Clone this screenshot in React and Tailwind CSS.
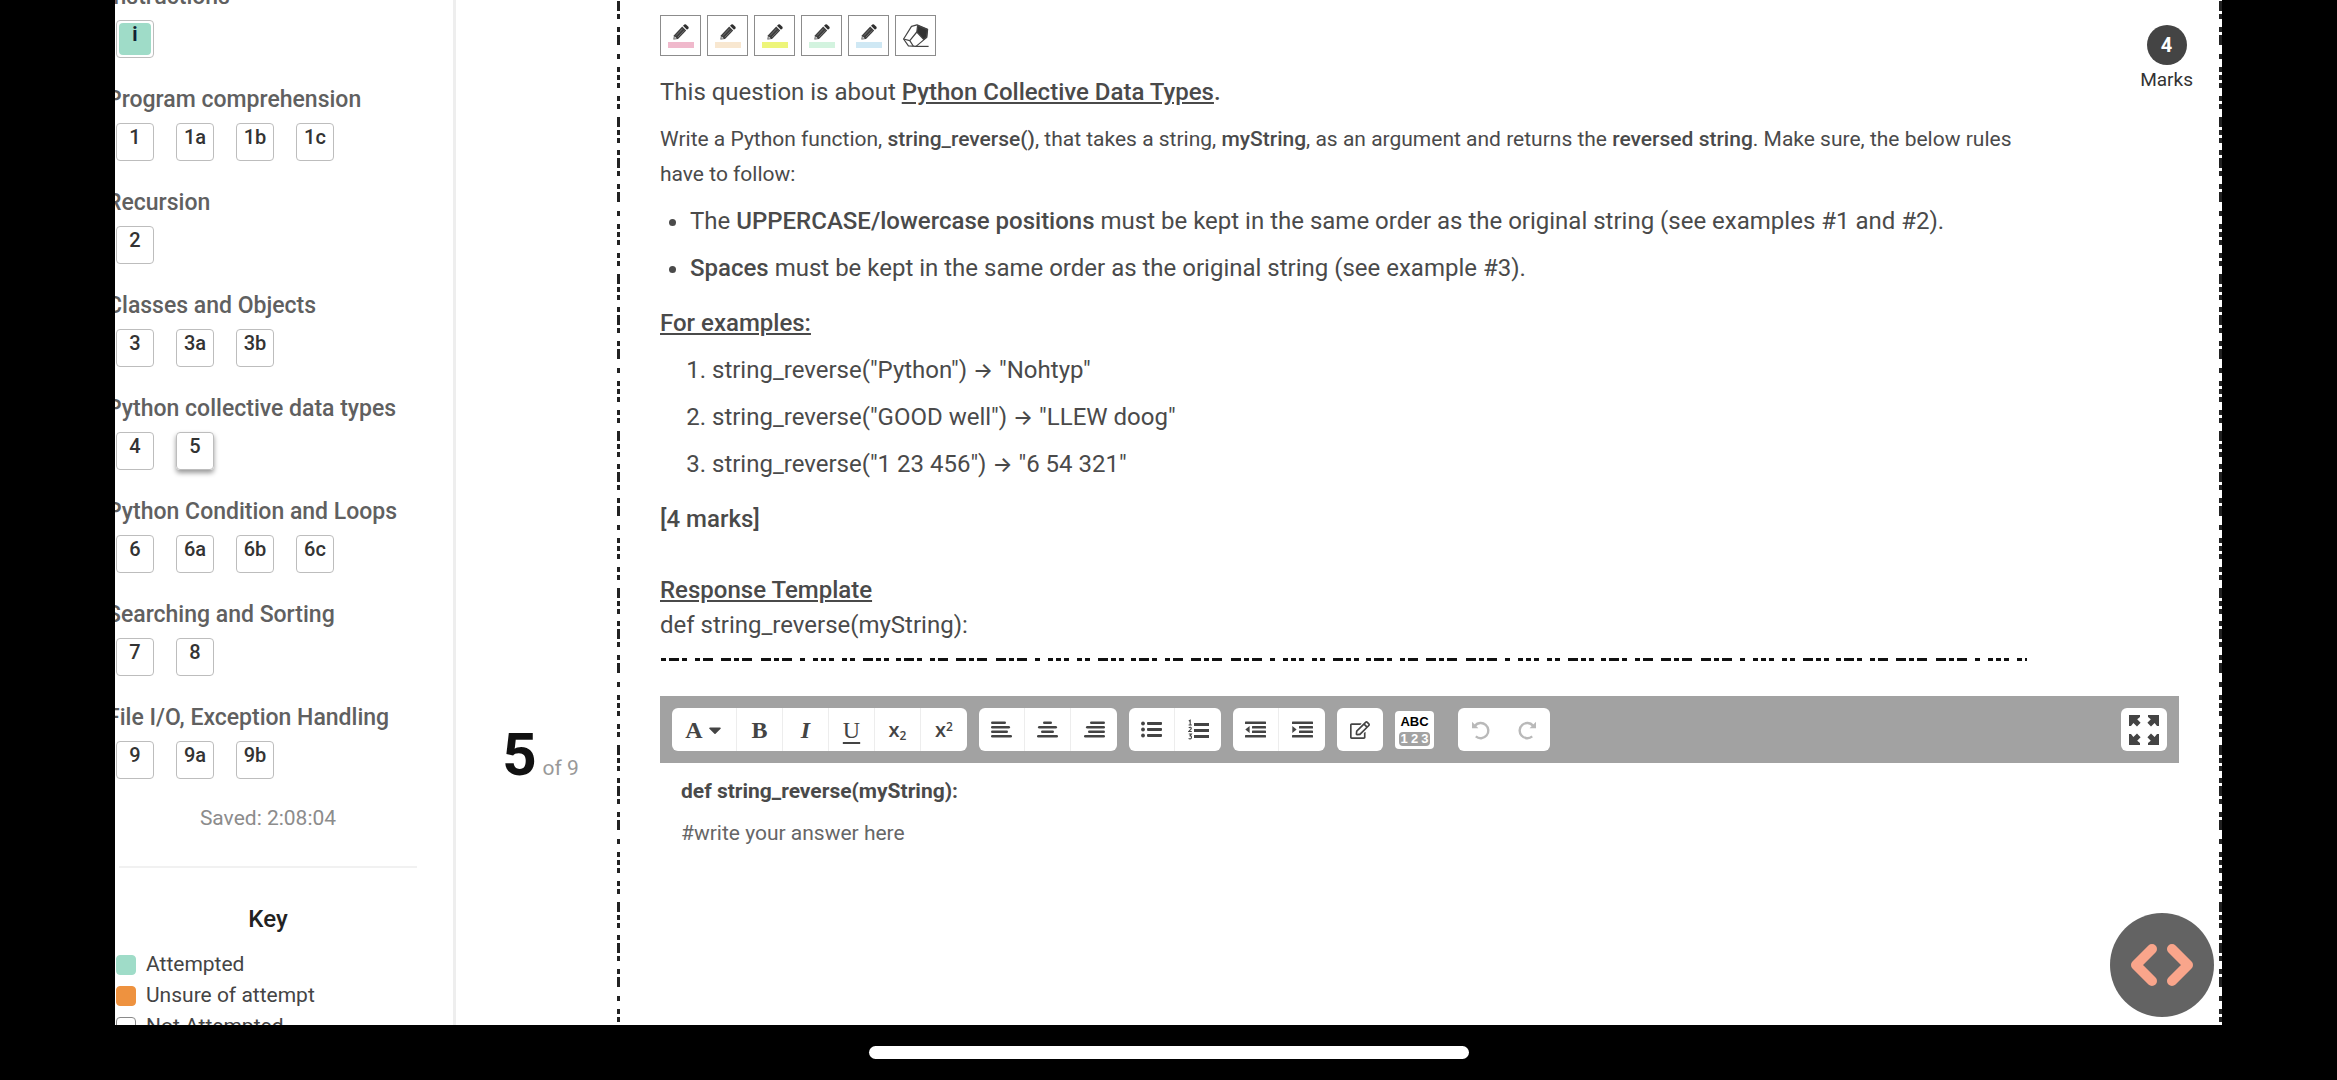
import React from "react";
import { FaRegEdit, FaCaretDown } from "react-icons/fa";

const sections = [
  { title: "Instructions", items: ["i"] },
  { title: "Program comprehension", items: ["1", "1a", "1b", "1c"] },
  { title: "Recursion", items: ["2"] },
  { title: "Classes and Objects", items: ["3", "3a", "3b"] },
  { title: "Python collective data types", items: ["4", "5"] },
  { title: "Python Condition and Loops", items: ["6", "6a", "6b", "6c"] },
  { title: "Searching and Sorting", items: ["7", "8"] },
  { title: "File I/O, Exception Handling", items: ["9", "9a", "9b"] },
];

const legend = [
  { label: "Attempted", swatch: "bg-[#9fdcc8] border-[#9fdcc8]" },
  { label: "Unsure of attempt", swatch: "bg-[#ee923f] border-[#ee923f]" },
  { label: "Not Attempted", swatch: "bg-white border-[#8a8a8a]" },
];

const highlighters = [
  { name: "Pink", color: "bg-[#f0b9cc]" },
  { name: "Peach", color: "bg-[#f8e7d0]" },
  { name: "Yellow", color: "bg-[#edf57a]" },
  { name: "Mint", color: "bg-[#d3f3df]" },
  { name: "Blue", color: "bg-[#cfe8f4]" },
];

const examples = [
  ['string_reverse("Python")', '"Nohtyp"'],
  ['string_reverse("GOOD well")', '"LLEW doog"'],
  ['string_reverse("1 23 456")', '"6 54 321"'],
];

const V_DASH = "5 8 5 3 5 3 5 8 5 3 5 8 10 3 5 3 5 7 5 3 10 3 5 8 5 3 10 9";
const H_DASH =
  "5 8 5 3 5 3 5 8 5 3 5 8 10 3 5 3 5 7 5 3 10 3 5 8 5 3 10 8 10 3 5 3 10 9 10 3 5 3 10 8";

function VerticalRule() {
  return (
    <svg className="w-[3px] shrink-0 self-stretch" aria-hidden="true">
      <line x1="1.5" y1="0" x2="1.5" y2="100%" stroke="#222" strokeWidth="3" strokeDasharray={V_DASH} strokeDashoffset="103" />
    </svg>
  );
}

function HorizontalRule() {
  return (
    <svg className="block h-[3px] w-full" aria-hidden="true">
      <line x1="0" y1="1.5" x2="100%" y2="1.5" stroke="#111" strokeWidth="3" strokeDasharray={H_DASH} strokeDashoffset="95" />
    </svg>
  );
}

function Pencil() {
  return (
    <svg className="h-4 w-4" viewBox="0 0 16 16" aria-hidden="true">
      <path d="M0.4 15.6 1 11.2 9.2 2.6 13.2 6.4 5 15Z" fill="#3c3c3c" />
      <path d="M10 1.8 11.4 0.6Q12.2 0 13 0.6L15.4 2.8Q16 3.6 15.4 4.4L14 5.7Z" fill="#2f2f2f" />
      <path d="M3 11.6 9.6 4.7M4.8 13.2 11.4 6.3" stroke="#8a8a8a" strokeWidth="0.7" />
      <path d="M1.2 14.8 1.6 12.2 3.9 14.4Z" fill="#ddd" />
    </svg>
  );
}

function Eraser() {
  return (
    <svg className="h-6 w-[26px]" viewBox="0 0 26 24" fill="none" stroke="#444" strokeWidth="1.2" strokeLinejoin="round" aria-hidden="true">
      <path d="M0.6 15 8.5 2.4 14 0.8 24.6 5.4 23.8 13.4 13 22.4 5.4 21.8Z" fill="#fff" />
      <path d="M0.6 15 6.8 16.6 13.8 8M6.8 16.6 10.4 22.2" />
      <path d="M14.6 1.6 24.4 5.6 23.4 13.2 20.6 15.4 13.8 8Z" fill="#333" />
      <path d="M12.6 22.4H25.6" />
    </svg>
  );
}

function Lines({ rows }) {
  return (
    <svg className="h-[17px] w-[21px]" viewBox="0 0 21 17" fill="none" stroke="#444" strokeWidth="2.4" strokeLinecap="round" aria-hidden="true">
      {rows.map(([a, b], i) => (
        <path key={i} d={`M${a + 1.2} ${1.8 + i * 4.5}H${b - 1.2}`} />
      ))}
    </svg>
  );
}

function BulletIcon() {
  return (
    <svg className="h-[17px] w-[21px]" viewBox="0 0 21 17" fill="#444" aria-hidden="true">
      {[2.5, 8.5, 14.5].map((y) => (
        <g key={y}>
          <circle cx="2" cy={y} r="1.9" />
          <rect x="6" y={y - 1.4} width="15" height="2.8" rx="0.8" />
        </g>
      ))}
    </svg>
  );
}

function NumberIcon() {
  return (
    <svg className="h-[22px] w-[21px]" viewBox="0 0 21 22" fill="none" stroke="#444" aria-hidden="true">
      <path d="M6 5.5H21M6 11.5H21M6 17.5H21" strokeWidth="2.8" />
      <path d="M0.8 2 2.2 1.2V6M0.6 6H3.8M0.8 9Q1.5 8 2.6 8.3 3.8 9 2.8 10.3L0.8 12.5H3.8M0.8 15H3.4L2 16.8Q3.8 17 3.4 18.9 2.6 20.4 0.6 19.6" strokeWidth="1.1" />
    </svg>
  );
}

function DentIcon({ direction }) {
  return (
    <svg className="h-[17px] w-[21px]" viewBox="0 0 21 17" fill="#444" aria-hidden="true">
      <rect x="0" y="0.4" width="21" height="2.6" rx="0.6" />
      <rect x="7" y="4.9" width="14" height="2.6" rx="0.6" />
      <rect x="7" y="9.4" width="14" height="2.6" rx="0.6" />
      <rect x="0" y="13.9" width="21" height="2.6" rx="0.6" />
      {direction === "out" ? <path d="M0.3 8.5 4.6 5V12Z" /> : <path d="M4.6 8.5 0.3 5V12Z" />}
    </svg>
  );
}

function UndoIcon() {
  return (
    <svg className="h-5 w-5" viewBox="0 0 20 20" fill="none" stroke="#b9b9b9" aria-hidden="true">
      <path d="M4 5.6A7.6 7.6 0 1 1 4.8 16.4" strokeWidth="2.4" />
      <path d="M1 1.8V8.2H7.4Z" fill="#b9b9b9" stroke="none" />
    </svg>
  );
}

function RedoIcon() {
  return (
    <svg className="h-5 w-5" viewBox="0 0 20 20" fill="none" stroke="#b9b9b9" aria-hidden="true">
      <path d="M16 5.6A7.6 7.6 0 1 0 15.2 16.4" strokeWidth="2.4" />
      <path d="M19 1.8V8.2H12.6Z" fill="#b9b9b9" stroke="none" />
    </svg>
  );
}

function ExpandIcon() {
  const arrow = "M0 0H11V2L8.2 4.2 11.6 7.8 8 11.4 4.4 8 2 11H0Z";
  return (
    <svg className="h-[30px] w-[30px]" viewBox="0 0 30 30" fill="#444" aria-hidden="true">
      <path d={arrow} />
      <path d={arrow} transform="translate(30 0) scale(-1 1)" />
      <path d={arrow} transform="translate(0 30) scale(1 -1)" />
      <path d={arrow} transform="translate(30 30) scale(-1 -1)" />
    </svg>
  );
}

function Group({ children }) {
  return <div className="flex h-[43px] divide-x divide-[#ededed] overflow-hidden rounded-md bg-white">{children}</div>;
}

function Tool({ label, wide, children }) {
  return (
    <button type="button" aria-label={label} className={`flex items-center justify-center text-[#444] ${wide ? "w-[65px]" : "w-[46px]"}`}>
      {children}
    </button>
  );
}

function Toolbar() {
  return (
    <div role="toolbar" aria-label="Formatting" className="flex items-center gap-3 bg-[#a2a2a2] p-3">
      <Group>
        <Tool label="Font style" wide>
          <span className="flex items-center gap-1 font-['Liberation_Serif',serif] text-2xl font-bold">
            A <FaCaretDown className="h-5 w-4" />
          </span>
        </Tool>
        <Tool label="Bold"><span className="font-['Liberation_Serif',serif] text-2xl font-bold">B</span></Tool>
        <Tool label="Italic"><span className="font-['Liberation_Serif',serif] text-2xl font-bold italic">I</span></Tool>
        <Tool label="Underline"><span className="font-['Liberation_Serif',serif] text-2xl underline underline-offset-4">U</span></Tool>
        <Tool label="Subscript">
          <span className="font-['Open_Sans',sans-serif] text-xl font-semibold">x<sub className="text-xs">2</sub></span>
        </Tool>
        <Tool label="Superscript">
          <span className="font-['Open_Sans',sans-serif] text-xl font-semibold">x<sup className="text-xs">2</sup></span>
        </Tool>
      </Group>
      <Group>
        <Tool label="Align left"><Lines rows={[[0, 15], [0, 19], [0, 17], [0, 21]]} /></Tool>
        <Tool label="Align center"><Lines rows={[[6, 15], [1, 20], [4, 17], [0, 21]]} /></Tool>
        <Tool label="Align right"><Lines rows={[[6, 21], [2, 21], [4, 21], [0, 21]]} /></Tool>
      </Group>
      <Group>
        <Tool label="Bulleted list"><BulletIcon /></Tool>
        <Tool label="Numbered list"><NumberIcon /></Tool>
      </Group>
      <Group>
        <Tool label="Decrease indent"><DentIcon direction="out" /></Tool>
        <Tool label="Increase indent"><DentIcon direction="in" /></Tool>
      </Group>
      <Group>
        <Tool label="Edit"><FaRegEdit className="h-5 w-5" /></Tool>
      </Group>
      <button type="button" aria-label="Word count" className="flex h-[38px] w-[39px] flex-col items-center justify-center gap-px rounded bg-white">
        <span className="font-['Liberation_Sans',sans-serif] text-[13px] leading-[18px] font-bold text-black">ABC</span>
        <span className="flex h-[14px] w-[31px] items-center justify-around rounded-sm bg-[#a2a2a2] font-['Liberation_Sans',sans-serif] text-[13px] leading-[14px] font-bold text-white">
          <span>1</span><span>2</span><span>3</span>
        </span>
      </button>
      <div className="ml-3 flex h-[43px] rounded-md bg-white">
        <Tool label="Undo"><UndoIcon /></Tool>
        <Tool label="Redo"><RedoIcon /></Tool>
      </div>
      <div className="ml-auto">
        <Group>
          <Tool label="Full screen"><ExpandIcon /></Tool>
        </Group>
      </div>
    </div>
  );
}

function Sidebar() {
  return (
    <aside className="w-[341px] shrink-0 overflow-hidden border-r-3 border-[#eeeeee]">
      <nav aria-label="Questions" className="-mt-[18px]">
        {sections.map((s) => (
          <section key={s.title} className="pb-[27px]">
            <h2 className="-ml-2 text-[23px] leading-[30px] font-medium whitespace-nowrap text-[#606060]">{s.title}</h2>
            <div className="mt-2 flex gap-[22px] pl-px">
              {s.items.map((item) => (
                <button
                  type="button"
                  key={item}
                  className={`flex h-[38px] w-[38px] justify-center rounded border border-[#bdbdbd] p-0.5 text-xl font-medium text-[#333] ${item === "5" ? "shadow-[0_3px_5px_rgba(0,0,0,0.4)]" : ""}`}
                >
                  <span className={`h-full w-full rounded-sm leading-[22px] ${item === "i" ? "bg-[#9fdcc8] font-bold text-[#123]" : ""}`}>{item}</span>
                </button>
              ))}
            </div>
          </section>
        ))}
      </nav>
      <div className="-mt-[3px] mr-9">
        <p className="pl-1 text-center text-[21px] leading-[30px] text-[#8c8c8c]">Saved: 2:08:04</p>
        <hr className="mt-[33px] ml-1 border-t-2 border-[#f1f1f1]" />
        <h2 className="mt-9 pl-1 text-center text-2xl leading-[30px] font-medium text-[#222]">Key</h2>
        <ul className="mt-[15px] pl-px">
          {legend.map((l) => (
            <li key={l.label} className="flex items-center gap-2.5 text-[21px] leading-[31px] text-[#444]">
              <span className={`h-5 w-5 rounded-sm border ${l.swatch}`} />
              {l.label}
            </li>
          ))}
        </ul>
      </div>
    </aside>
  );
}

export default function App() {
  return (
    <div className="flex h-screen flex-col overflow-hidden bg-black font-['Roboto','Liberation_Sans',sans-serif]">
      <div className="mx-[115px] flex min-h-0 flex-1 overflow-hidden bg-white">
        <Sidebar />
        <div className="flex w-[161px] shrink-0 items-baseline justify-center gap-1.5 pt-[720px] pl-2">
          <span className="text-[60px] leading-[70px] font-bold text-[#111]">5</span>
          <span className="text-[21px] text-[#999]">of 9</span>
        </div>
        <VerticalRule />
        <main className="flex min-w-0 flex-1 flex-col pr-10 pl-10 text-[#4a4a4a]">
          <div className="flex justify-between">
            <div className="max-w-[1367px] flex-1 pt-[15px]">
              <div role="toolbar" aria-label="Highlighters" className="flex gap-1.5">
                {highlighters.map((h) => (
                  <button type="button" key={h.name} aria-label={`${h.name} highlighter`} className="flex h-[41px] w-[41px] flex-col items-center gap-0.5 border border-[#8c8c8c] pt-2">
                    <Pencil />
                    <span className={`h-1.5 w-[26px] ${h.color}`} />
                  </button>
                ))}
                <button type="button" aria-label="Eraser" className="flex h-[41px] w-[41px] items-center justify-center border border-[#8c8c8c]">
                  <Eraser />
                </button>
              </div>
              <div className="mt-[19px] text-2xl leading-[35px]">
                <p>This question is about <b className="font-medium underline">Python Collective Data Types</b><b className="font-medium">.</b></p>
                <p className="mt-3 text-[21px] leading-[35px]">
                  Write a Python function, <b className="font-medium">string_reverse()</b>, that takes a string, <b className="font-medium">myString</b>, as an argument and returns the <b className="font-medium">reversed string</b>. Make sure, the below rules have to follow:
                </p>
                <ul className="mt-3 list-disc space-y-3 pl-[30px]">
                  <li>The <b className="font-medium">UPPERCASE/lowercase positions</b> must be kept in the same order as the original string (see examples #1 and #2).</li>
                  <li><b className="font-medium">Spaces</b> must be kept in the same order as the original string (see example #3).</li>
                </ul>
                <p className="mt-5 font-medium underline">For examples:</p>
                <ol className="mt-3 list-decimal space-y-3 pl-[52px]">
                  {examples.map(([call, result]) => (
                    <li key={call}>
                      {call} <span className="font-['Inter',sans-serif] text-[21px] leading-none font-medium">→</span> {result}
                    </li>
                  ))}
                </ol>
                <p className="mt-5 font-medium">[4 marks]</p>
                <p className="mt-9 font-medium underline">Response Template</p>
                <p>def string_reverse(myString):</p>
              </div>
              <div className="mt-[15px]">
                <HorizontalRule />
              </div>
            </div>
            <div className="-mr-5 flex flex-col items-center pt-[25px] pr-1.5">
              <span className="flex h-10 w-10 items-center justify-center rounded-full bg-[#444] text-xl font-bold text-white">4</span>
              <span className="mt-1 text-[19px] leading-[22px] text-[#333]">Marks</span>
            </div>
          </div>
          <div className="mt-[35px]">
            <Toolbar />
            <div role="textbox" aria-label="Answer" aria-multiline="true" contentEditable suppressContentEditableWarning className="px-[21px] pt-[13px] text-[21px] leading-[30px] outline-none">
              <p className="font-bold">def string_reverse(myString):</p>
              <p className="mt-3 text-[#666]">#write your answer here</p>
            </div>
          </div>
        </main>
        <VerticalRule />
      </div>
      <button type="button" aria-label="Open code tools" className="absolute right-[123px] bottom-[63px] flex h-[104px] w-[104px] items-center justify-center rounded-full bg-[#636363]">
        <svg className="h-[44px] w-[64px]" viewBox="0 0 64 44" fill="none" stroke="#f9a58b" strokeWidth="10" strokeLinecap="round" strokeLinejoin="round" aria-hidden="true">
          <path d="M22 6 6 22 22 38M42 6 58 22 42 38" />
        </svg>
      </button>
      <div className="flex h-[55px] shrink-0 justify-center pt-[21px]">
        <div className="h-[13px] w-[600px] rounded-full bg-white" />
      </div>
    </div>
  );
}
